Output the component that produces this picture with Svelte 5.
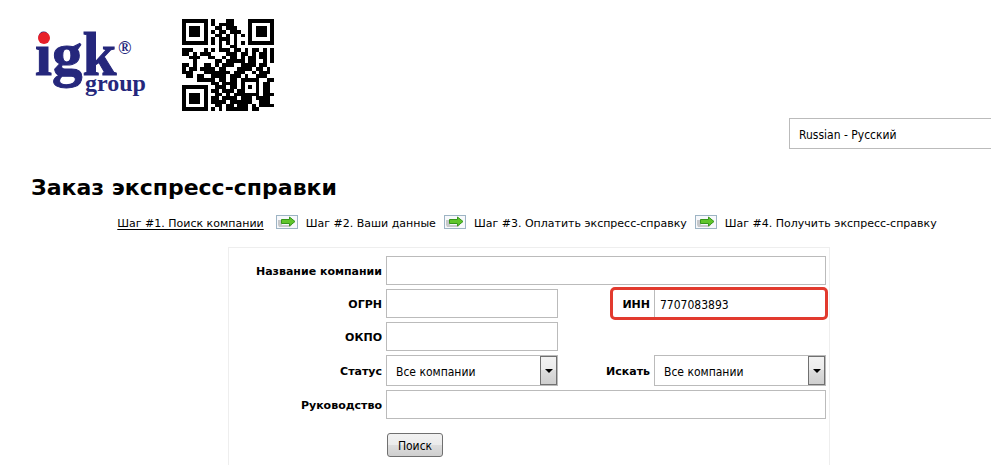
<script>
    const steps = [
        'Шаг #1. Поиск компании',
        'Шаг #2. Ваши данные',
        'Шаг #3. Оплатить экспресс-справку',
        'Шаг #4. Получить экспресс-справку'
    ]

    const qr = [
        '1111111010001100001111111',
        '1000001010111100001000001',
        '1011101001101110001011101',
        '1011101010110111001011101',
        '1011101001101010101011101',
        '1000001010111010001000001',
        '1111111010101010101111111',
        '0000000000100110000000000',
        '1110001010111011010110101',
        '1101011100001110110101101',
        '0011100110010110101101101',
        '0001000001101111101100101',
        '1101001101011100111101100',
        '1011011110110001111011010',
        '1110001111111011100101110',
        '0110110011110111010011100',
        '0000111110110110111110011',
        '0000000011011110100010110',
        '1111111001110110101010110',
        '1000001011011101100010110',
        '1011101001101011111110111',
        '1011101011011110111011110',
        '1011101011110111111001110',
        '1000001001101101110101111',
        '1111111010101111110110000'
    ]

    let qrPath = qr.map((row, y) =>
        [...row].map((c, x) => c === '1' ? `M${x} ${y}h1v1h-1z` : '').join('')
    ).join('')

    let inn = '7707083893'
</script>

<div class="page">
    <header>
        <svg class="logo" width="120" height="92" viewBox="0 0 120 92" role="img" aria-label="igk group">
            <text class="igk" x="4" y="56">igk</text>
            <circle cx="13" cy="19" r="6" />
            <text class="reg" x="87" y="35">®</text>
            <text class="group" x="54" y="72">group</text>
        </svg>
        <svg class="qr" width="92" height="92" viewBox="0 0 25 25" role="img" aria-label="QR">
            <path d={qrPath} />
        </svg>
    </header>

    <div class="lang">
        <select aria-label="Язык">
            <option>Russian - Русский</option>
        </select>
    </div>

    <h1>Заказ экспресс-справки</h1>

    <nav>
        {#each steps as step, i}
            {#if i > 0}
                <svg class="arrow" width="22" height="14" viewBox="0 0 22 14" aria-hidden="true">
                    <rect x="0.5" y="0.5" width="21" height="13" fill="#f7f8fb" stroke="#9db4c4" />
                    <path d="M2 5h4v5h10l-2 2H3l-1-2z" fill="#c6c8ca" />
                    <path d="M5.500 4.500h8V2l5.500 4.500L13.500 11V8.500h-8z" fill="#5fc52b" stroke="#35951a" />
                </svg>
            {/if}
            {#if i === 0}
                <a href="#step1">{step}</a>
            {:else}
                <span>{step}</span>
            {/if}
        {/each}
    </nav>

    <form on:submit|preventDefault>
        <label for="name">Название компании</label>
        <input id="name" class="wide" type="text">

        <label for="ogrn">ОГРН</label>
        <input id="ogrn" type="text">
        <label for="inn">ИНН</label>
        <div class="marked">
            <input id="inn" type="text" bind:value={inn}>
            <div class="mark"></div>
        </div>

        <label for="okpo">ОКПО</label>
        <input id="okpo" class="last" type="text">

        <label class="first" for="status">Статус</label>
        <div class="select">
            <select id="status">
                <option>Все компании</option>
            </select>
            <span class="drop"></span>
        </div>
        <label for="scope">Искать</label>
        <div class="select">
            <select id="scope">
                <option>Все компании</option>
            </select>
            <span class="drop"></span>
        </div>

        <label for="head">Руководство</label>
        <input id="head" class="wide" type="text">

        <button type="submit">Поиск</button>
    </form>
</div>

<style>
:global(body) {
    margin: 0;
    background: #fff;
    overflow-x: hidden;
}

.page {
    margin-right: -36px;
    padding: 19px 0 0 31px;
    color: #000;
    font-family: Verdana, "DejaVu Sans", sans-serif;
    font-size: 11px;
}

header {
    display: flex;
    gap: 31px;
}

.logo text {
    font-family: "Liberation Serif", serif;
    font-weight: bold;
    fill: #25277c;
}

.logo circle {
    fill: #e8202a;
}

.logo .igk {
    font-size: 61px;
    stroke: #25277c;
    stroke-width: 1px;
}

.logo .reg {
    font-size: 18px;
}

.logo .group {
    font-size: 24px;
    stroke: #fff;
    stroke-width: 3px;
    paint-order: stroke;
}

.qr {
    shape-rendering: crispEdges;
}

.lang {
    display: flex;
    justify-content: flex-end;
    margin-top: 7px;
}

.lang select {
    width: 238px;
}

h1 {
    margin: 26px 0 0;
    font-size: 22px;
    line-height: 26px;
}

nav {
    display: flex;
    justify-content: center;
    gap: 8px;
    margin-top: 14px;
    padding-right: 4px;
    line-height: 18px;
    white-space: nowrap;
}

nav a {
    margin-right: 4px;
    color: #000;
    text-underline-offset: 2px;
}

.arrow {
    flex: none;
}

form {
    display: grid;
    grid-template-columns: 1fr 172px 88px 172px;
    align-items: center;
    gap: 4px;
    box-sizing: border-box;
    width: 602px;
    margin: 14px auto 0;
    padding: 8px 3px 8px 0;
    border: 1px solid #eee;
    border-bottom: 0;
}

label {
    padding-top: 2px;
    font-weight: bold;
    text-align: right;
}

input, select, button {
    box-sizing: border-box;
    margin: 0;
    color: #000;
    font-family: Tahoma, "DejaVu Sans Condensed", "DejaVu Sans", sans-serif;
    font-size: 12px;
}

input {
    display: block;
    width: 100%;
    height: 29px;
    padding: 2px 5px 0;
    border: 1px solid #bbb;
    border-radius: 0;
    background: #fff;
}

.wide {
    grid-column: 2 / 5;
}

.last {
    grid-column: 2;
}

.first {
    grid-column: 1;
}

.marked, .select {
    position: relative;
}

.mark {
    position: absolute;
    inset: -2px -2px -2px -44px;
    border: 3px solid #e23a2e;
    border-radius: 5px;
    pointer-events: none;
}

select {
    display: block;
    width: 100%;
    height: 31px;
    padding: 2px 9px 0;
    border: 1px solid #bbb;
    border-radius: 0;
    background: #fff;
    appearance: none;
}

.drop {
    position: absolute;
    top: 1px;
    right: 1px;
    bottom: 1px;
    box-sizing: border-box;
    width: 17px;
    border: 1px solid #707070;
    background: linear-gradient(#f2f2f2, #ebebeb 50%, #ddd 50%, #cfcfcf);
    pointer-events: none;
}

.drop::after {
    content: "";
    position: absolute;
    top: 12px;
    left: 4px;
    border: 4px solid transparent;
    border-top-color: #000;
    border-bottom: 0;
}

button {
    grid-column: 2;
    justify-self: start;
    width: 56px;
    height: 24px;
    margin: 10px 0 0 1px;
    padding: 2px 0 0;
    border: 1px solid #707070;
    border-radius: 3px;
    background: linear-gradient(#f2f2f2, #ebebeb 50%, #ddd 50%, #cfcfcf);
}
</style>
